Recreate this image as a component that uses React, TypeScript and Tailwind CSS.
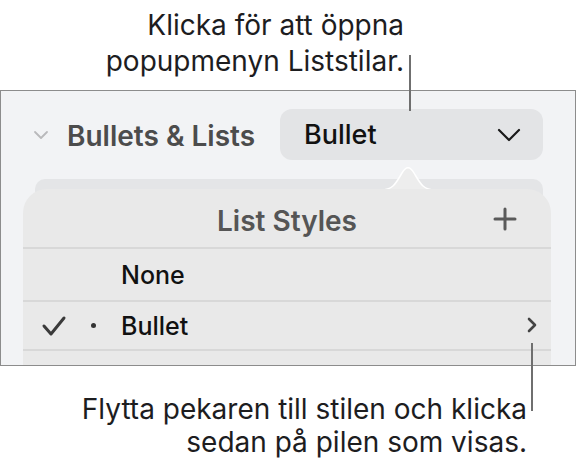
import React from "react";

export default function App() {
  return (
    <div
      className="relative w-[577px] h-[465px] bg-white overflow-hidden"
      style={{ fontFamily: "Inter, 'Noto Sans', sans-serif" }}
    >
      {/* top caption */}
      <div className="pt-[7px] w-[404px] text-right text-[28px] leading-[36px] text-[#1d1d1f]">
        <div>Klicka för att öppna</div>
        <div>popupmenyn Liststilar.</div>
      </div>

      {/* frame */}
      <div className="mt-[11px] w-[576px] h-[276px] border border-[#8c8c8c] bg-[#f2f3f5] overflow-hidden">
        <div className="mt-[18px] flex items-center h-[51px]">
          <div className="w-[66px] flex justify-center pl-[16px] pr-[2px]">
            <svg width="16" height="10" viewBox="0 0 16 10">
              <path d="M2 2 L8 8 L14 2" fill="none" stroke="#b9b9bb" strokeWidth="1.8" strokeLinecap="round" strokeLinejoin="round" />
            </svg>
          </div>
          <div className="w-[213px] pt-[2px] text-[28px] font-semibold text-[#4c4c4c] whitespace-nowrap">Bullets &amp; Lists</div>
          <div className="w-[263px] h-[51px] rounded-[12px] bg-[#e3e4e6] flex items-center justify-between pl-[24px] pr-[22px]">
            <span className="pt-[2px] text-[27px] font-medium text-[#111]">Bullet</span>
            <svg width="24" height="14" viewBox="0 0 24 14">
              <path d="M2 2 L12 12 L22 2" fill="none" stroke="#1a1a1a" strokeWidth="2.2" strokeLinecap="round" strokeLinejoin="round" />
            </svg>
          </div>
        </div>

        {/* popup area */}
        <div className="relative mt-[19px] ml-[34px] w-[508px] h-[200px] rounded-t-[10px] bg-[#e4e5e7]">
          <svg className="absolute left-[346px] top-[-14px]" width="54" height="26" viewBox="0 0 54 26">
            <path d="M0 25 C12 25 15 18 21 8 C25 1 29 1 33 8 C39 18 42 25 54 25 Z" fill="#ededed" stroke="#ffffff" strokeWidth="1.5" />
          </svg>
        </div>
        <div className="relative -mt-[190px] ml-[22px] w-[528px] bg-[#e9e9e9] rounded-t-[24px] h-[200px]">
          <div className="h-[58px] pt-[5px] flex items-center justify-center relative">
            <span className="text-[28px] font-semibold text-[#555555]">List Styles</span>
            <svg className="absolute right-[34px] top-[18px]" width="24" height="24" viewBox="0 0 24 24">
              <path d="M12 2 V22 M2 12 H22" stroke="#5a5a5a" strokeWidth="3" strokeLinecap="round" />
            </svg>
          </div>
          <div className="border-t-2 border-[#d8d8d8] h-[53px] pt-[3px] flex items-center pl-[98px]">
            <span className="text-[25px] font-medium text-[#111]">None</span>
          </div>
          <div className="border-t-2 border-[#d8d8d8] h-[49px] flex items-center relative">
            <svg className="ml-[18px]" width="26" height="22" viewBox="0 0 26 22">
              <path d="M3 11 L10 19 L23 3" fill="none" stroke="#3a3a3a" strokeWidth="3" strokeLinecap="round" strokeLinejoin="round" />
            </svg>
            <span className="ml-[24px] w-[5px] h-[5px] rounded-full bg-[#333]" />
            <span className="ml-[25px] pt-[2px] text-[25px] font-medium text-[#111]">Bullet</span>
            <svg className="absolute right-[14px] top-[15px]" width="10" height="16" viewBox="0 0 10 16">
              <path d="M2 2 L8 8 L2 14" fill="none" stroke="#444" strokeWidth="2.6" strokeLinecap="round" strokeLinejoin="round" />
            </svg>
          </div>
          <div className="border-t-2 border-[#d8d8d8] h-[40px]" />
        </div>
      </div>

      {/* leader lines */}
      <div className="absolute left-[409px] top-[55px] w-[2px] h-[56px] bg-[#6f6f6f]" />
      <div className="absolute left-[531px] top-[343px] w-[2px] h-[68px] bg-[#6f6f6f]" />

      {/* bottom caption */}
      <div className="absolute left-0 top-[393px] w-[527px] text-right text-[28px] leading-[33px] text-[#1d1d1f] whitespace-nowrap">
        <div>Flytta pekaren till stilen och klicka</div>
        <div>sedan på pilen som visas.</div>
      </div>
    </div>
  );
}
